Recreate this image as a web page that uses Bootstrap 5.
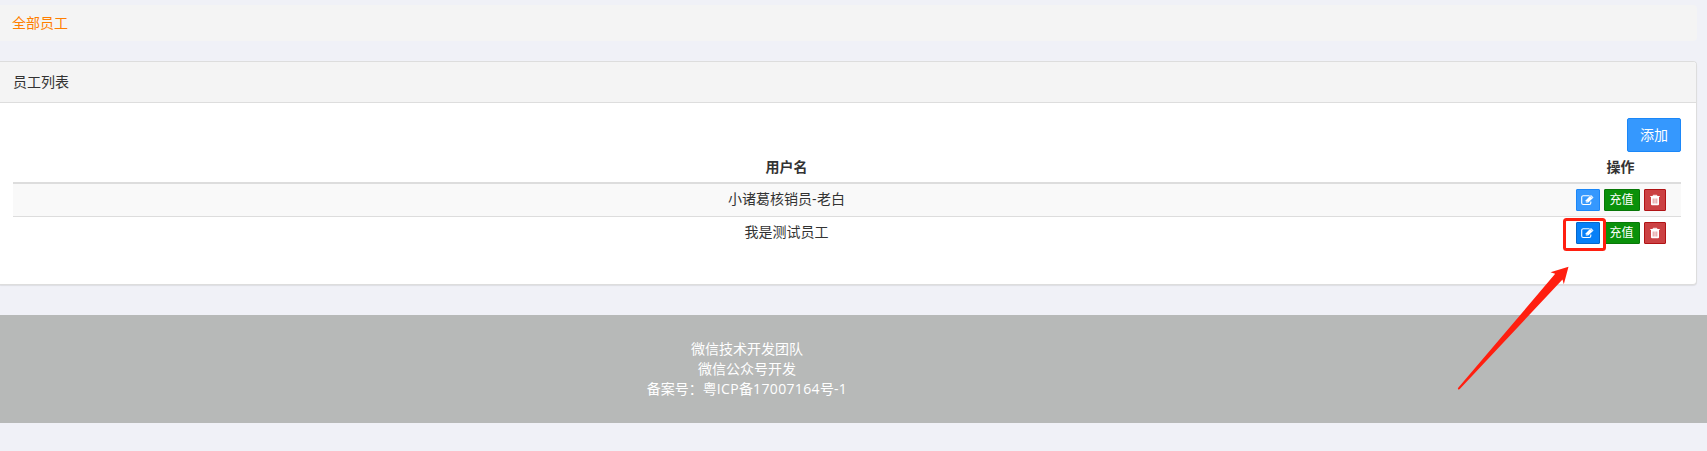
<!DOCTYPE html>
<html lang="zh-CN">
<head>
<meta charset="utf-8">
<title>全部员工</title>
<link rel="stylesheet" href="https://cdn.jsdelivr.net/npm/bootstrap@5.3.0/dist/css/bootstrap.min.css">
<style>
body{background:#f0f1f7;color:#333;font:14px/20px "Open Sans","Noto Sans CJK SC",sans-serif;overflow:hidden;height:451px}
.content-area{width:1697px;padding-top:5px}
.crumb-bar{background:#f4f4f4;height:36px;padding:8px 12px;color:#ff7f00;margin-bottom:20px;border-radius:0 4px 4px 0}
.panel-card{border:1px solid #ddd;border-left:0;border-radius:0 4px 4px 0;box-shadow:0 1px 1px rgba(0,0,0,.08);height:224px;background:#fff}
.panel-card .card-header{background:#f4f4f4;border-bottom:1px solid #ddd;border-radius:0 3px 0 0;height:41px;padding:10px 13px}
.panel-card .card-body{padding:15px 15px 0 13px}
.btn{--bs-btn-border-radius:2px;color:#fff!important;line-height:20px;font-size:14px}
.btn-add{background:#3598fe;border-color:#1b87f8;padding:6px 11.5px;height:34px;width:54px}
.btn-mini{--bs-btn-border-radius:1px;height:22px;font-size:12px;line-height:18px;padding:1px 5px;display:inline-flex;align-items:center;justify-content:center}
.btn-mini svg{flex:none}
.btn-edit{width:24px;background:#3598fe;border-color:#1b87f8}
.btn-edit.active-edit{background:#0780f7;border-color:#0567cb}
.btn-pay{width:36px;background:#0a910a;border-color:#087808}
.btn-del{width:22px;background:#cb4143;border-color:#b01315}
.staff-table{margin:0;--bs-table-bg:transparent;color:#333;table-layout:fixed;text-align:center;border-collapse:separate;border-spacing:0}
.staff-table th{padding:5px;height:32px;border-bottom:2px solid #ddd;color:#333;font-weight:700}
.staff-table td{padding:5px;height:33px;border:0;color:#333}
.staff-table tr.odd td{background:#f9f9f9;border-bottom:1px solid #ddd}
.ops{gap:4px}
.page-foot{background:#b7b9b8;height:108px;margin-top:30px;padding-top:24px;color:#fff}
.page-foot div{width:1494px;text-align:center}
.latin{letter-spacing:.36px}
.mark-layer{position:absolute;left:0;top:0;pointer-events:none}
</style>
</head>
<body>
<main class="content-area">
  <nav class="crumb-bar">全部员工</nav>
  <section class="card panel-card">
    <div class="card-header">员工列表</div>
    <div class="card-body">
      <div class="d-flex justify-content-end"><button class="btn btn-add">添加</button></div>
      <table class="table staff-table">
        <colgroup><col><col style="width:121px"></colgroup>
        <thead><tr><th>用户名</th><th>操作</th></tr></thead>
        <tbody>
          <tr class="odd"><td>小诸葛核销员<span class="latin">-</span>老白</td><td><div class="d-flex justify-content-center ops">
            <button class="btn btn-mini btn-edit" aria-label="编辑"><svg width="13" height="12"><use href="#edit"/></svg></button><button class="btn btn-mini btn-pay">充值</button><button class="btn btn-mini btn-del" aria-label="删除"><svg width="10" height="12"><use href="#trash"/></svg></button></div></td></tr>
          <tr><td>我是测试员工</td><td><div class="d-flex justify-content-center ops">
            <button class="btn btn-mini btn-edit active-edit" aria-label="编辑"><svg width="13" height="12"><use href="#edit"/></svg></button><button class="btn btn-mini btn-pay">充值</button><button class="btn btn-mini btn-del" aria-label="删除"><svg width="10" height="12"><use href="#trash"/></svg></button></div></td></tr>
        </tbody>
      </table>
    </div>
  </section>
</main>
<footer class="page-foot"><div>微信技术开发团队<br>微信公众号开发<br>备案号：粤<span class="latin">ICP</span>备<span class="latin">17007164</span>号<span class="latin">-1</span></div></footer>
<svg class="mark-layer" width="1707" height="451">
  <defs>
    <symbol id="edit" viewBox="0 0 13 12"><path d="M8.6 1.7H2.3A1.6 1.6 0 0 0 .7 3.3v5.6a1.6 1.6 0 0 0 1.6 1.6h5.9a1.6 1.6 0 0 0 1.6-1.6V7.4" fill="none" stroke="#fff" stroke-width="1.1"/><path d="M4.8 8.6V6.2L10 1l2.5 2.4-5.3 5.2z" fill="#fff"/><path d="M5.3 6.9l1.1 1.1M9.2 1.9l2.2 2.2" stroke="#3598fe" stroke-width=".5"/></symbol>
    <symbol id="trash" viewBox="0 0 10 12"><path d="M3.2 2.2V1.3h3.6v.9" fill="none" stroke="#fff"/><path d="M.3 2.1h9.4v1H9v7.1q0 1.1-1 1.1H2q-1 0-1-1.1V3.1H.3z" fill="#fff"/><path d="M3.2 4.5v5M5 4.5v5M6.8 4.5v5" stroke="#cb4143" stroke-width=".6"/></symbol>
  </defs>
  <rect x="1564.5" y="219.5" width="40" height="30" rx="2" fill="none" stroke="#ff1f10" stroke-width="3"/>
  <path d="M1568.5 266.8l-18 5.5 4.7 1.5L1457.8 388.3l.7 1.5 1.3-.9L1562.5 279.5l1.3 4.8z" fill="#ff1f10"/>
</svg>
<script src="https://cdn.jsdelivr.net/npm/bootstrap@5.3.0/dist/js/bootstrap.bundle.min.js"></script>
</body>
</html>
